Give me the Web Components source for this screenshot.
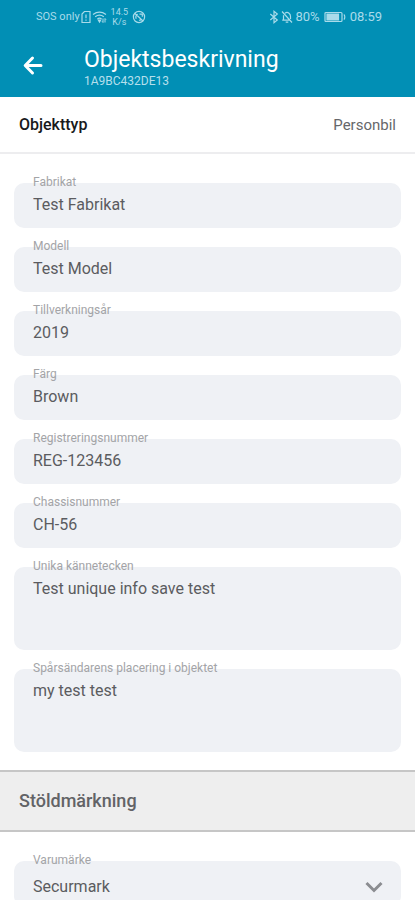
<!DOCTYPE html>
<html lang="sv">
<head>
<meta charset="utf-8">
<meta name="viewport" content="width=device-width, initial-scale=1">
<title>Objektsbeskrivning</title>
<style>
  body { margin: 0; background: #fff; font-family: Roboto, "Liberation Sans", sans-serif; }
</style>
</head>
<body>
<object-page></object-page>

<script>
const define = (name, html, setup) => {
  const template = document.createElement('template');
  template.innerHTML = html;
  customElements.define(name, class extends HTMLElement {
    connectedCallback() {
      if (this.shadowRoot) return;
      const root = this.attachShadow({ mode: 'open' });
      root.append(template.content.cloneNode(true));
      if (setup) setup(this, root);
    }
  });
};

const fieldStyle = `
  :host { display: grid; }
  label, .box { grid-area: 1 / 1; }
  label {
    z-index: 1; justify-self: start; align-self: start;
    margin: -8px 0 0 19px; font-size: 12px; line-height: 14px; color: #a3a4a7;
  }
  .box {
    box-sizing: border-box; width: 100%; margin: 0; border: 0; outline: 0;
    border-radius: 10px; background: #eff1f5; color: #5b5c60;
    font: 16px/20px Roboto, "Liberation Sans", sans-serif;
  }`;

define('status-bar', `
  <style>
    :host { display: flex; justify-content: space-between; align-items: center;
      height: 34px; padding: 0 33px 0 36px; color: #a9dbea; font-size: 11px; line-height: 14px; }
    div { display: flex; align-items: center; }
    svg { display: block; fill: none; stroke: currentColor; stroke-width: 1.2; }
    .left { gap: 1px; }
    .speed { font-size: 9px; line-height: 10px; text-align: center; margin: 0 3px; }
    .right { font-size: 13px; gap: 2px; }
    .battery { margin: 0 2px; }
  </style>
  <div class="left">
    <span>SOS only</span>
    <svg width="10" height="14" viewBox="0 0 10 14" aria-hidden="true"><path d="M3.4 1.5H9v11H1V4z"/><path d="M5 4.5v3.7M5 9.4v1.3"/></svg>
    <svg width="15" height="14" viewBox="0 0 15 14" aria-hidden="true"><path d="M1 4.4Q7.5-.3 14 4.4M3.2 6.8Q7.5 3.6 11.8 6.8M5.4 9Q7.5 7.4 9.6 9"/><path d="M6.4 10.2h2.2L7.5 12z" fill="currentColor"/><path d="M11 8.5v4M13 8.5v4M10 11.3l1 1.2M14 9.7l-1-1.2" stroke-width="1"/></svg>
    <span class="speed">14.5<br>K/s</span>
    <svg width="14" height="14" viewBox="0 0 14 14" aria-hidden="true"><circle cx="7" cy="7" r="5.6"/><path d="M3 3.5l8 7.5M4.2 8.8Q3 5.5 5.7 4.2M7.5 4.2h2.8v2.6M7 10.2q2 .3 3-1"/></svg>
  </div>
  <div class="right">
    <svg width="10" height="14" viewBox="0 0 10 14" aria-hidden="true"><path d="M1.3 4l7 6L5 12.7V1.3L8.3 4l-7 6"/></svg>
    <svg width="12" height="14" viewBox="0 0 12 14" aria-hidden="true"><path d="M1 1.5l10 11M1.2 10.2h7.6M2.5 10V5.2M4 3.2Q6 1.7 8 3.2Q9.5 4.3 9.5 6.5V9M4.7 12.2h2.6"/></svg>
    <span>80%</span>
    <svg class="battery" width="22" height="12" viewBox="0 0 22 12" aria-hidden="true"><path d="M2 1.5h15q1 0 1 1v7q0 1-1 1H2q-1 0-1-1v-7q0-1 1-1z"/><path d="M3 3h11.5v6H3z" fill="currentColor"/><path d="M19.8 3.4q1 .6 1 2.6t-1 2.6"/></svg>
    <span>08:59</span>
  </div>`);

define('app-header', `
  <style>
    :host { display: block; background: #018fb5; color: #fff; }
    .bar { display: flex; padding: 12px 20px 8px; gap: 38px; align-items: flex-start; }
    button { display: flex; margin: 7px 0 0; padding: 0; border: 0; background: none; color: inherit; }
    svg { display: block; fill: none; stroke: currentColor; stroke-width: 3; stroke-linecap: round; stroke-linejoin: round; }
    h1 { margin: 0; font-size: 23px; line-height: 27px; font-weight: 400; }
    p { margin: 0; font-size: 12px; line-height: 16px; color: #b5dfec; }
  </style>
  <status-bar></status-bar>
  <div class="bar">
    <button type="button" aria-label="Tillbaka"><svg width="26" height="26" viewBox="0 0 26 26"><path d="M21 12.5H5.5M12.5 5l-7.3 7.5L12.5 20"/></svg></button>
    <div><h1><slot></slot></h1><p><slot name="id"></slot></p></div>
  </div>`);

define('type-row', `
  <style>
    :host { display: flex; justify-content: space-between; padding: 18px 19px 17px;
      border-bottom: 2px solid #ededef; font-size: 15px; line-height: 20px; color: #66676a; }
    b { font-size: 16px; font-weight: 500; color: #18191b; }
  </style>
  <b><slot name="name"></slot></b><span><slot></slot></span>`);

define('text-field', `
  <style>${fieldStyle}
    .box { height: 45px; padding: 0 19px 2px; }
  </style>
  <label for="f"></label><input class="box" id="f" type="text">`,
  (host, root) => {
    root.querySelector('label').textContent = host.getAttribute('label');
    root.querySelector('input').value = host.getAttribute('value');
  });

define('text-block', `
  <style>${fieldStyle}
    .box { display: block; resize: none; padding: 12px 19px 11px; }
  </style>
  <label for="f"></label><textarea class="box" id="f" rows="3"></textarea>`,
  (host, root) => {
    root.querySelector('label').textContent = host.getAttribute('label');
    root.querySelector('textarea').value = host.getAttribute('value');
  });

define('select-field', `
  <style>${fieldStyle}
    .box { appearance: none; height: 45px; padding: 6px 44px 0 19px; }
    svg { grid-area: 1 / 1; justify-self: end; align-self: center; margin: 7px 18px 0 0;
      pointer-events: none; fill: none; stroke: #8b8d91; stroke-width: 3; }
  </style>
  <label for="f"></label><select class="box" id="f"></select>
  <svg width="18" height="12" viewBox="0 0 18 12" aria-hidden="true"><path d="M1.5 2L9 9.5 16.5 2"/></svg>`,
  (host, root) => {
    root.querySelector('label').textContent = host.getAttribute('label');
    root.querySelector('select').add(new Option(host.getAttribute('value')));
  });

define('field-list', `
  <style>
    :host { display: flex; flex-direction: column; gap: 19px; padding: 29px 14px 18px; }
  </style>
  <slot></slot>`);

define('section-title', `
  <style>
    :host { display: block; padding: 19px; background: #eee;
      border-top: 2px solid #c6c6c6; border-bottom: 2px solid #c6c6c6; }
    h2 { margin: 0; font-size: 18px; line-height: 20px; font-weight: 500; color: #626366; }
  </style>
  <h2><slot></slot></h2>`);

define('object-page', `
  <style>
    :host { display: flex; flex-direction: column; height: 100vh; }
    main { flex: 1; min-height: 0; overflow-y: auto; scrollbar-width: none; }
  </style>
  <app-header>Objektsbeskrivning<span slot="id">1A9BC432DE13</span></app-header>
  <main>
    <type-row><span slot="name">Objekttyp</span>Personbil</type-row>
    <field-list>
      <text-field label="Fabrikat" value="Test Fabrikat"></text-field>
      <text-field label="Modell" value="Test Model"></text-field>
      <text-field label="Tillverkningsår" value="2019"></text-field>
      <text-field label="Färg" value="Brown"></text-field>
      <text-field label="Registreringsnummer" value="REG-123456"></text-field>
      <text-field label="Chassisnummer" value="CH-56"></text-field>
      <text-block label="Unika kännetecken" value="Test unique info save test"></text-block>
      <text-block label="Spårsändarens placering i objektet" value="my test test"></text-block>
    </field-list>
    <section-title>Stöldmärkning</section-title>
    <field-list>
      <select-field label="Varumärke" value="Securmark"></select-field>
    </field-list>
  </main>`);
</script>
</body>
</html>
